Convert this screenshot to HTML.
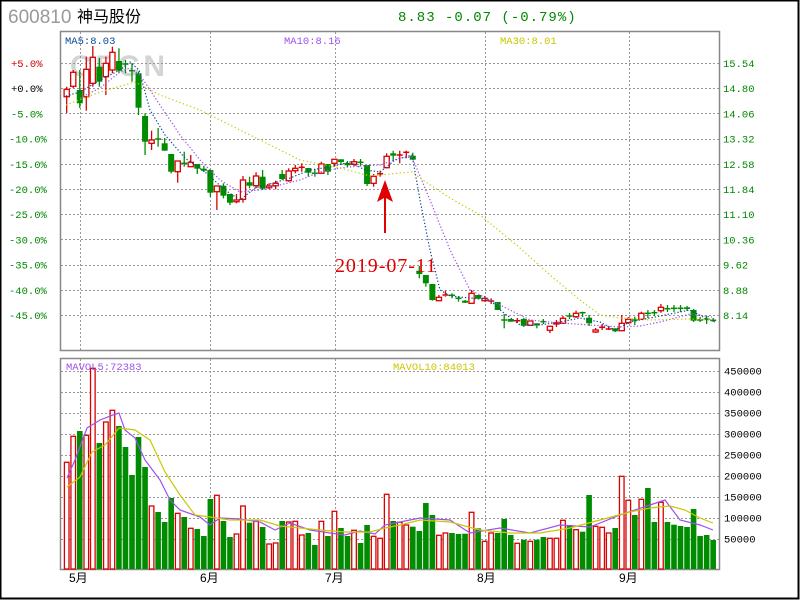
<!DOCTYPE html>
<html><head><meta charset="utf-8"><style>
html,body{margin:0;padding:0;background:#fff;width:800px;height:600px;overflow:hidden}
svg{display:block}
</style></head><body>
<svg id="s" width="800" height="600" xmlns="http://www.w3.org/2000/svg">
<rect x="0.5" y="0.5" width="798" height="598" fill="#fff" stroke="#000" stroke-width="2"/>
<text x="8" y="23" font-family="Liberation Sans, sans-serif" font-size="19" fill="#999">600810</text>
<text x="77" y="22" font-family="Liberation Sans, 'Noto Sans CJK SC', sans-serif" font-size="16" fill="#000">神马股份</text>
<text x="398" y="21" font-family="Liberation Mono, monospace" font-size="14" letter-spacing="1" fill="#008800">8.83 -0.07 (-0.79%)</text>
<text x="70" y="76" font-family="Liberation Sans, sans-serif" font-size="30" font-weight="bold" fill="#d4d4d4" textLength="95">CFCN</text>
<g id="grid"></g>
<rect x="60.5" y="31.5" width="659" height="319" fill="none" stroke="#888" stroke-width="1.5"/>
<rect x="60.5" y="358.5" width="659" height="211" fill="none" stroke="#888" stroke-width="1.5"/>
<g id="vol"></g>
<g id="cdl"></g>
<g id="ma"></g>
<g font-family="Liberation Mono, monospace" font-size="10.5">
<text x="65" y="44" fill="#0a4a9a">MA5:8.03</text>
<text x="284" y="44" fill="#a050f0">MA10:8.16</text>
<text x="500" y="44" fill="#c8c800">MA30:8.01</text>
<text x="66" y="370" fill="#a050f0">MAVOL5:72383</text>
<text x="393" y="370" fill="#c8c800">MAVOL10:84013</text>
</g>
<g font-family="Liberation Mono, monospace" font-size="10.5" id="lab"></g>
<text x="335" y="272" font-family="Liberation Serif, serif" font-size="20" fill="#e00000" textLength="101" lengthAdjust="spacing">2019-07-11</text>
<polygon points="385,180 377,202 384,198 384,233 386,233 386,198 393,202" fill="#e00000"/>
<g font-family="Liberation Sans, 'Noto Sans CJK SC', sans-serif" font-size="12" fill="#000">
<text x="69" y="582">5月</text><text x="200" y="582">6月</text><text x="325" y="582">7月</text><text x="477" y="582">8月</text><text x="619" y="582">9月</text>
</g>
</svg>
<script>
var NS='http://www.w3.org/2000/svg';
function add(g,tag,at,txt){var e=document.createElementNS(NS,tag);for(var k in at)e.setAttribute(k,at[k]);if(txt!=null)e.textContent=txt;document.getElementById(g).appendChild(e);}
var D='#999';
[80,210,335,485,629].forEach(function(x){
add('grid','line',{x1:x+.5,y1:32,x2:x+.5,y2:350,stroke:D,'stroke-dasharray':'2,2'});
add('grid','line',{x1:x+.5,y1:359,x2:x+.5,y2:569,stroke:D,'stroke-dasharray':'2,2'});});
for(var k=0;k<11;k++){var y=Math.round(63+25.2*k)+.5;add('grid','line',{x1:61,y1:y,x2:719,y2:y,stroke:D,'stroke-dasharray':'2,2'});}
for(var k=0;k<9;k++){var y=Math.round(370.7+21*k)+.5;add('grid','line',{x1:61,y1:y,x2:719,y2:y,stroke:D,'stroke-dasharray':'2,2'});}
var L=['+5.0%','+0.0%','-5.0%','-10.0%','-15.0%','-20.0%','-25.0%','-30.0%','-35.0%','-40.0%','-45.0%'];
var R=['15.54','14.80','14.06','13.32','12.58','11.84','11.10','10.36','9.62','8.88','8.14'];
for(var k=0;k<11;k++){var y=63+25.2*k+4;
add('lab','text',{x:k<3?11:9,y:y,fill:k==0?'#d00000':(k==1?'#000':'#008800')},L[k]);
add('lab','text',{x:723,y:y,fill:'#008800'},R[k]);}
var VL=['450000','400000','350000','300000','250000','200000','150000','100000','50000'];
for(var k=0;k<9;k++)add('lab','text',{x:724,y:370.7+21*k+4,fill:'#000'},VL[k]);
var RED='#d80000',GR='#008c00';
function X(i){return 66.7+6.53*i;}
var vc='rrgrrgrrgg'+'gggrgggrgr'+'gggrggrrgr'+'grrgrrrggr'+'grggrggrrr'+'g'+'rrggggrrgg'+'grgrrgggrg'+'rggrrrgrgg'+'rrrgrrgrgg'+'rgggggggg';
var vt=[462.3,436.3,431,435.3,368.3,443,422,410.3,426,447,475,437,467,506,512,522,498,513.3,517,528.3,529,536,499,495.3,521,537,534,506,522.7,521.3,527,544,543,521,522,521.3,535,533,545,521.3,536,511.3,528,536,530.3,543,525,536.3,538.3,494.3,521,
522.3,525,526.7,531,503,515,535.3,533,533,534,533.7,512.3,528.3,541.3,533,533,519,535,543.3,539.7,541.3,539.7,537,538.3,538.3,520.3,525,529.7,531.7,495,526.3,527.3,533,528,476.3,500.3,515,499.3,488,522,502.3,522,524.7,526,527,509,536,535,540];
for(var i=0;i<100;i++){var c=vc[i],x=X(i),t=vt[i];
if(c=='r')add('vol','rect',{x:x-2.3,y:t,width:4.6,height:569-t,fill:'#fff',stroke:RED,'stroke-width':1.3});
else add('vol','rect',{x:x-2.8,y:t,width:5.6,height:569-t,fill:GR});}
var C=[
['r',89.3,96.7,86.7,113],['r',72.3,86.3,70,88],['g',90,103.3,70,108],['r',69.3,96.7,56.7,110.7],['r',57.3,83.3,46,86.7],['g',66.7,81.7,58,86.7],['r',63.3,76.7,56.7,95],['r',52.3,70,46.7,73.3],['g',61,70.7,48.3,73.3],['g',64,64,60,73.3],
['g',70.7,70.7,63,81.7],['g',73.3,107.7,71.7,115],['g',116,141.7,113.3,155],['r',140,143.3,130.7,150],['g',139,139,128,146.7],['g',143.3,150.7,138,150.7],['g',154,171.7,154,173.3],['r',161,171.7,161,182.7],['g',163.3,163.3,151.7,166.7],['r',162.3,166.7,155,166.7],
['g',164,168.7,164,174],['g',168.7,170.7,166,172],['g',170,192.7,170,196.7],['r',186,191.7,186,210],['g',185.7,195.7,183.3,198.3],['g',194,202.7,194,205],['r',200,201.7,194,203.3],['r',180,199.3,176,202.7],['g',182.3,185.7,176.7,188.3],['r',176,185.7,172.3,188.3],
['g',176.7,188.7,170,190],['r',186,187.7,183.3,189.3],['r',183.3,185.7,180.7,189.3],['g',174,179,170,180],['r',171,180.7,168.3,181.7],['r',168.3,170.7,165,173.3],['r',167.3,167.3,163.3,171.7],['g',168,172.7,168,176.7],['g',173.3,173.3,169.3,176.7],['r',164,173.3,161.7,173.3],
['g',164,171.7,164,175],['r',159.3,163.3,159.3,166.7],['g',159.3,162,159.3,165],['g',163,165.3,161,167],['r',161.7,164.3,159,166],['g',162.3,162.3,159,166],['g',165,184,165,186],['r',176.3,183.3,174,186.7],['r',173.7,173.7,170.7,176.7],['r',156.3,167.7,153.3,168.3],
['g',153.3,155.7,150.7,160.7],['r',155,155,150.7,163.3],['r',152.3,152.3,150.7,158.3],['g',155.7,159.7,152.7,160],['g',270.7,274,266,278.3],['g',275,283.3,275,286.7],['g',284,300,284,300.7],['r',297.3,300.7,295,300.7],['r',295,296,290.7,296.7],['g',295.3,295.3,293.3,298.3],
['g',298.3,298.3,296,301.7],['g',300.7,302.7,300,303],['r',293.3,303.3,290,303.3],['g',295,298.7,295,299.3],['r',298.3,300.7,296,301.7],['r',301,301,298.3,304],['g',302,310,302,310],['g',320,320,314,328.3],['g',319,321.7,319,321.7],['r',320.7,320.7,318,323],
['g',319,325.7,318,327],['r',321,325.3,321,325.3],['g',323.3,325.3,323.3,328.3],['g',321.7,321.7,319,324],['r',326.3,330.3,326.3,333],['r',322.7,324,320,327],['r',318.3,323.3,316,324],['g',316,316,313,319],['r',313.3,316.7,310.7,318],['g',312.7,312.7,311.7,317],
['g',317.7,323.3,315,326],['r',330,332,328,333],['r',327.3,327.3,324,330],['r',329,329,326,330],['g',328.3,331.3,328.3,332],['r',323.3,330.7,315,331],['r',319.3,322.7,317,324],['g',320,320,316.7,325],['r',313.3,319.3,311.7,320],['g',313.3,313.3,310,318],
['g',312.7,312.7,310,316],['r',307.3,310.7,304,312.7],['g',308.7,308.7,305,312],['g',308.3,308.3,305,312],['g',308.3,308.3,305,312],['g',307.3,309,306,311],['g',310,320.7,309,322],['g',320,320,317,322],['g',319.3,319.3,316,324],['g',320.3,320.3,318,322]];
C.forEach(function(c,i){var x=X(i),col=c[0]=='r'?RED:GR;
if(c[0]=='r'){
 add('cdl','line',{x1:x,y1:c[3],x2:x,y2:c[1],stroke:col,'stroke-width':1.3});
 add('cdl','line',{x1:x,y1:c[2],x2:x,y2:c[4],stroke:col,'stroke-width':1.3});
 if(c[2]-c[1]<1.2)add('cdl','line',{x1:x-3,y1:c[1],x2:x+3,y2:c[1],stroke:col,'stroke-width':1.5});
 else add('cdl','rect',{x:x-2.6,y:c[1],width:5.2,height:c[2]-c[1],fill:'#fff',stroke:col,'stroke-width':1.3});
}else{
 add('cdl','line',{x1:x,y1:c[3],x2:x,y2:c[4],stroke:col,'stroke-width':1.3});
 if(c[2]-c[1]<1.2)add('cdl','line',{x1:x-3,y1:c[1],x2:x+3,y2:c[1],stroke:col,'stroke-width':1.5});
 else add('cdl','rect',{x:x-3,y:c[1],width:6,height:c[2]-c[1],fill:col});
}});
function pl(pts,col,dash){add('ma','polyline',{points:pts,fill:'none',stroke:col,'stroke-width':1.2,'stroke-dasharray':dash||''});}
pl('66,96 80,92 100,80 120,70 130,62 139,70 150,110 165,135 185,158 205,172 225,190 240,200 255,188 270,184 290,178 310,170 330,167 350,162 365,170 380,172 395,160 412,155 420,200 430,250 440,290 450,296 470,298 490,300 500,310 520,325 540,325 560,322 580,318 600,322 615,330 630,322 650,318 670,314 690,310 705,318 715,322','#0a4a9a','1.3,2');
pl('80,98 100,88 120,72 130,68 140,75 160,105 180,135 200,160 220,180 240,192 260,190 280,185 300,180 320,172 340,168 360,166 380,165 400,158 412,157 430,200 450,250 470,290 480,295 500,305 530,320 560,323 590,325 620,327 640,326 660,322 690,314 712,317','#a050f0','1.3,2');
pl('66,105 100,92 135,82 160,95 200,110 250,135 300,160 340,168 370,176 400,173 412,172 420,178 450,198 480,215 520,248 550,275 580,300 600,315 620,318 650,320 690,319 712,320','#c8c800','1.3,2.5');
pl('67,478 75,460 87,428 100,420 113,415 119,413 125,430 135,438 145,460 160,480 170,500 180,510 200,517 210,525 220,518 240,519 260,522 275,530 290,523 310,530 330,533 345,535 360,531 375,534 385,525 400,522 420,518 450,520 470,533 500,528 530,533 560,525 590,527 620,515 650,505 665,500 680,520 700,525 713,530','#a050f0');
pl('67,487 80,477 92,452 105,445 119,428 135,430 150,440 165,472 180,495 195,515 210,517 230,520 260,520 280,526 300,528 320,530 345,532 370,532 385,528 400,525 420,520 450,522 480,530 510,533 540,533 570,528 600,520 630,512 650,508 670,506 685,510 700,518 713,523','#c8c800');
</script>
</body></html>
